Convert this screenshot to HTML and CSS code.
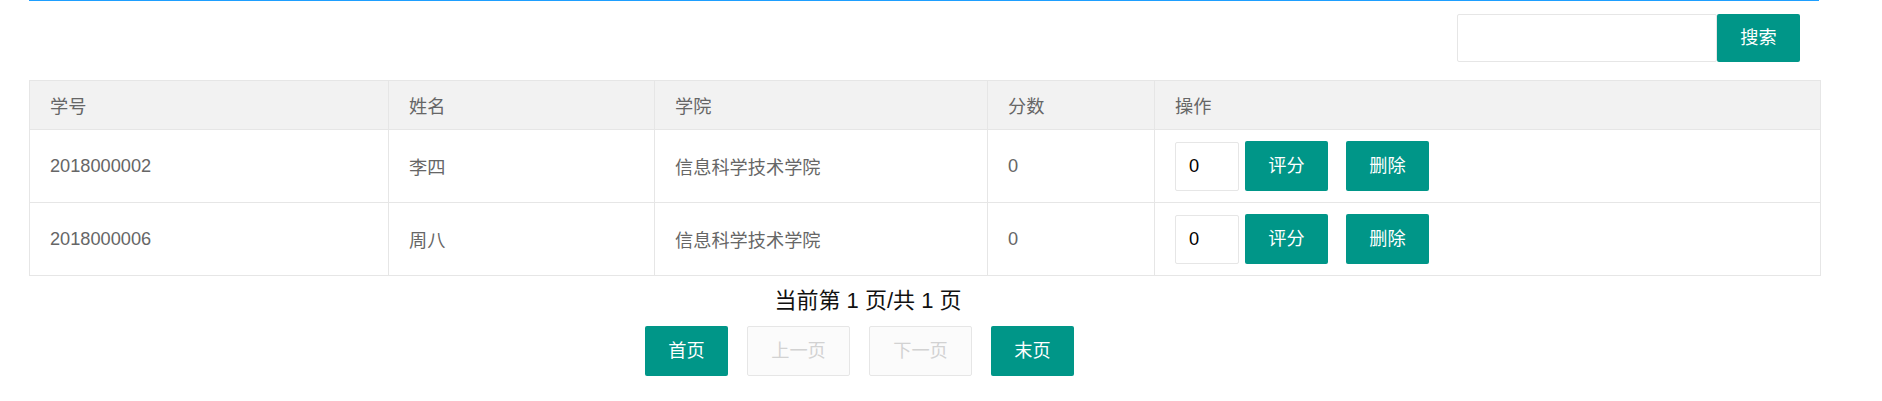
FILE: index.html
```html
<!DOCTYPE html>
<html lang="zh-CN">
<head>
<meta charset="utf-8">
<title>成绩管理</title>
<link rel="stylesheet" href="styles.css">
</head>
<body>
<div class="page">
  <div class="topline"></div>
  <div class="search-bar">
    <input class="search-input" type="text">
    <button class="btn">搜索</button>
  </div>
  <table class="grid">
    <colgroup>
      <col class="c1"><col class="c2"><col class="c3"><col class="c4"><col class="c5">
    </colgroup>
    <thead>
      <tr><th>学号</th><th>姓名</th><th>学院</th><th>分数</th><th>操作</th></tr>
    </thead>
    <tbody>
      <tr>
        <td>2018000002</td><td>李四</td><td>信息科学技术学院</td><td>0</td>
        <td><div class="ops"><input class="score" type="text" value="0"><button class="btn">评分</button><button class="btn del">删除</button></div></td>
      </tr>
      <tr>
        <td>2018000006</td><td>周八</td><td>信息科学技术学院</td><td>0</td>
        <td><div class="ops"><input class="score" type="text" value="0"><button class="btn">评分</button><button class="btn del">删除</button></div></td>
      </tr>
    </tbody>
  </table>
</div>
<div class="pager">
  <div class="pager-info">当前第 1 页/共 1 页</div>
  <div class="pager-btns">
    <button class="btn">首页</button>
    <button class="btn disabled wide">上一页</button>
    <button class="btn disabled wide">下一页</button>
    <button class="btn">末页</button>
  </div>
</div>
</body>
</html>
```

FILE: styles.css
```css
html, body {
  margin: 0;
  padding: 0;
  background: #fff;
}
body {
  font-family: "Liberation Sans", "Noto Sans CJK SC", sans-serif;
  font-size: 18.2px;
  color: #666;
}
.page {
  width: 1790px;
  margin-left: 29px;
}
.topline {
  height: 1px;
  background: #1e9fff;
}
.search-bar {
  display: flex;
  justify-content: flex-end;
  padding: 13px 19px 0 0;
  height: 49px;
  margin-bottom: 17px;
}
.search-input {
  box-sizing: border-box;
  width: 260px;
  height: 48px;
  border: 1px solid #e6e6e6;
  border-radius: 2px;
  padding: 0 13px;
  font: inherit;
  outline: none;
}
.btn {
  box-sizing: border-box;
  height: 48px;
  padding: 0 23px;
  border: 1px solid transparent;
  border-radius: 2px;
  background: #009688;
  color: #fff;
  font-family: inherit;
  font-size: 18.2px;
  line-height: 1;
  white-space: nowrap;
  cursor: pointer;
}
.search-bar .btn {
  width: 83px;
  padding: 0;
}
.grid {
  width: 1791px;
  border-collapse: collapse;
  table-layout: fixed;
}
.grid .c1 { width: 359px; }
.grid .c2 { width: 266px; }
.grid .c3 { width: 333px; }
.grid .c4 { width: 167px; }
.grid .c5 { width: 666px; }
.grid th,
.grid td {
  border: 1px solid #e6e6e6;
  padding: 0 20px;
  text-align: left;
  font-weight: normal;
  color: #666;
  vertical-align: middle;
}
.grid th {
  background: #f2f2f2;
  height: 48px;
}
.grid td {
  height: 72px;
}
.ops {
  display: flex;
  align-items: center;
}
.score {
  box-sizing: border-box;
  width: 64px;
  height: 49px;
  border: 1px solid #e6e6e6;
  border-radius: 2px;
  padding: 0 13px;
  font: inherit;
  color: #000;
  outline: none;
}
.ops .btn {
  width: 83px;
  height: 50px;
  padding: 0;
  margin-left: 6px;
}
.ops .btn.del {
  margin-left: 18px;
}
.pager {
  width: 1719px;
  text-align: center;
}
.pager-info {
  margin-top: 12px;
  padding-left: 17px;
  font-size: 22px;
  line-height: 26px;
  color: #111;
}
.pager-btns {
  display: flex;
  justify-content: center;
  gap: 19px;
  margin-top: 12px;
}
.pager-btns .btn {
  width: 83px;
  height: 50px;
  padding: 0;
}
.pager-btns .btn.wide {
  width: 103px;
}
.btn.disabled {
  background: #fbfbfb;
  border-color: #e6e6e6;
  color: #d2d2d2;
  cursor: not-allowed;
}
```
